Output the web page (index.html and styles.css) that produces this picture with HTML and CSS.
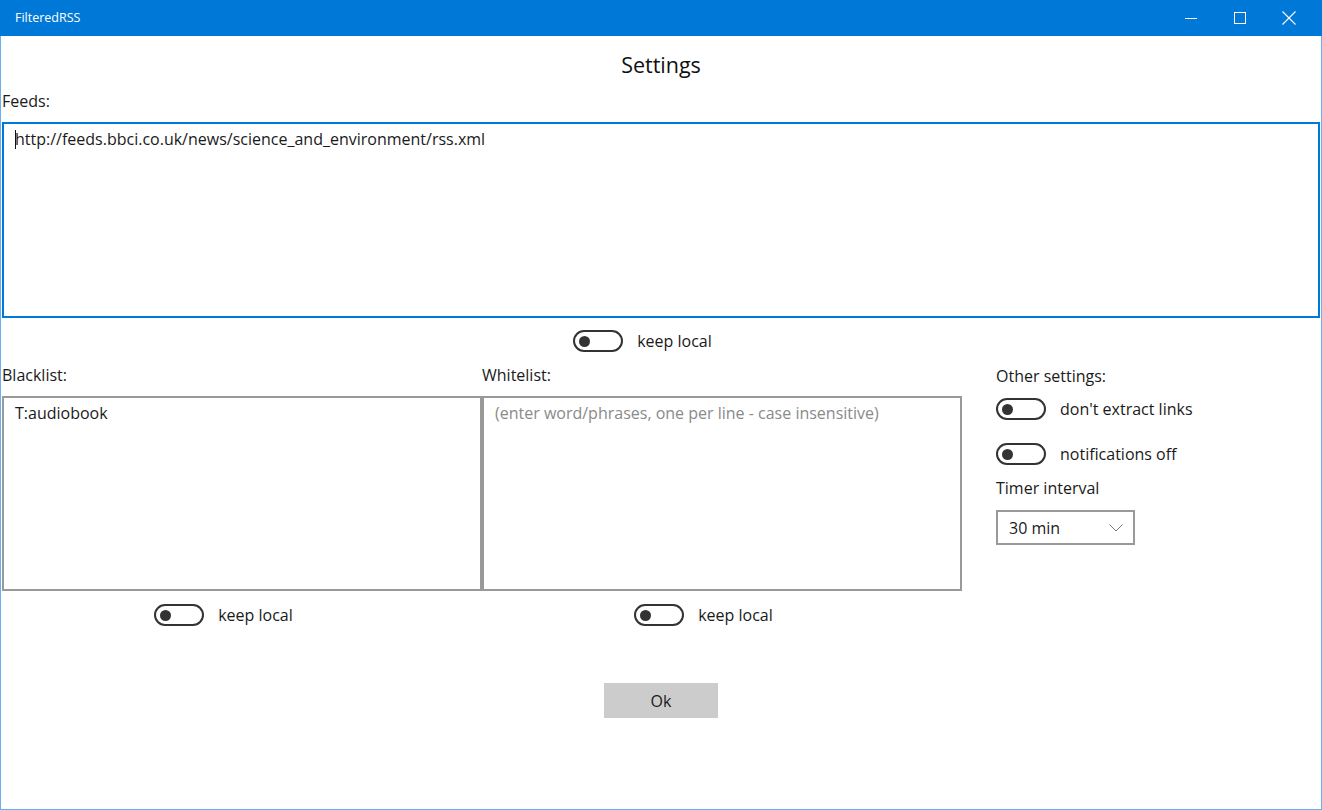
FILE: index.html
```html
<!DOCTYPE html>
<html>
<head>
<meta charset="utf-8">
<link rel="stylesheet" href="styles.css">
</head>
<body>
<div class="window">
  <div class="titlebar">
    <span class="app-title">FilteredRSS</span>
    <div class="caption-buttons">
      <span class="cap-btn">
        <svg width="12" height="12" viewBox="0 0 12 12"><line x1="0" y1="6.5" x2="12" y2="6.5" stroke="#fff" stroke-width="1"/></svg>
      </span>
      <span class="cap-btn">
        <svg width="12" height="12" viewBox="0 0 12 12"><rect x="0.5" y="0.5" width="11" height="11" fill="none" stroke="#fff" stroke-width="1"/></svg>
      </span>
      <span class="cap-btn">
        <svg width="14" height="14" viewBox="0 0 14 14"><path d="M0.5 0.5 L13.5 13.5 M13.5 0.5 L0.5 13.5" stroke="#fff" stroke-width="1.1" fill="none"/></svg>
      </span>
    </div>
  </div>
  <div class="content">
    <h1 class="page-title">Settings</h1>
    <div class="label">Feeds:</div>
    <div class="textbox feeds focused"><span class="caret"></span>http://feeds.bbci.co.uk/news/science_and_environment/rss.xml</div>
    <div class="toggle-row centered feeds-toggle">
      <span class="toggle"><span class="knob"></span></span>
      <span class="toggle-text">keep local</span>
    </div>

    <div class="lists">
      <div class="list-col">
        <div class="label">Blacklist:</div>
        <div class="textbox listbox">T:audiobook</div>
        <div class="toggle-row centered list-toggle">
          <span class="toggle"><span class="knob"></span></span>
          <span class="toggle-text">keep local</span>
        </div>
      </div>
      <div class="list-col">
        <div class="label">Whitelist:</div>
        <div class="textbox listbox placeholder">(enter word/phrases, one per line - case insensitive)</div>
        <div class="toggle-row centered list-toggle">
          <span class="toggle"><span class="knob"></span></span>
          <span class="toggle-text">keep local</span>
        </div>
      </div>
      <div class="other-col">
        <div class="label other-label">Other settings:</div>
        <div class="toggle-row other-toggle">
          <span class="toggle"><span class="knob"></span></span>
          <span class="toggle-text">don't extract links</span>
        </div>
        <div class="toggle-row other-toggle second">
          <span class="toggle"><span class="knob"></span></span>
          <span class="toggle-text">notifications off</span>
        </div>
        <div class="label timer-label">Timer interval</div>
        <div class="combo">
          <span>30 min</span>
          <svg class="chevron" width="14" height="8" viewBox="0 0 14 8"><path d="M0.5 0.5 L7 7 L13.5 0.5" fill="none" stroke="#777" stroke-width="1"/></svg>
        </div>
      </div>
    </div>

    <div class="actions">
      <button class="ok-btn">Ok</button>
    </div>
  </div>
</div>
</body>
</html>
```

FILE: styles.css
```css
* { box-sizing: border-box; }
html, body { margin: 0; padding: 0; background: #fff; }
body {
  font-family: "Open Sans", "Noto Sans", "Liberation Sans", sans-serif;
  color: #1a1a1a;
  font-size: 16px;
}
.window {
  width: 1322px;
  height: 810px;
  display: flex;
  flex-direction: column;
}
.titlebar {
  height: 36px;
  background: #0078d7;
  display: flex;
  align-items: center;
  justify-content: space-between;
  color: #fff;
  flex: none;
}
.app-title {
  font-size: 12.5px;
  padding-left: 15px;
  padding-bottom: 2px;
}
.caption-buttons { display: flex; height: 36px; margin-right: 9px; }
.cap-btn {
  width: 49px;
  height: 36px;
  display: flex;
  align-items: center;
  justify-content: center;
}
.content {
  flex: 1;
  border: 1px solid #6aaeef;
  border-top: none;
  padding: 0 1px;
  display: flex;
  flex-direction: column;
}
.page-title {
  margin: 15px 0 0;
  font-size: 21.5px;
  font-weight: normal;
  line-height: 28px;
  text-align: center;
  color: #111;
}
.label {
  line-height: 20px;
  font-size: 16px;
  color: #1a1a1a;
}
.content > .label { margin-top: 12px; }
.textbox {
  border: 2px solid #999;
  background: #fff;
  padding: 5px 11px 6px;
  line-height: 20px;
  font-size: 16px;
}
.feeds {
  margin-top: 11px;
  height: 196px;
  border-color: #0078d7;
  position: relative;
}
.caret {
  display: inline-block;
  width: 1px;
  height: 19px;
  background: #111;
  vertical-align: -4px;
  margin-right: -1px;
}
.toggle-row {
  display: flex;
  align-items: center;
  height: 22px;
}
.centered { justify-content: center; padding-right: 37px; }
.feeds-toggle { margin-top: 12px; }
.toggle {
  width: 50px;
  height: 22px;
  border: 2px solid #333;
  border-radius: 11px;
  display: flex;
  align-items: center;
  padding-left: 4px;
  flex: none;
}
.knob {
  width: 11px;
  height: 11px;
  border-radius: 50%;
  background: #333;
}
.toggle-text {
  margin-left: 14px;
  line-height: 20px;
}
.lists {
  display: flex;
  margin-top: 13px;
}
.list-col {
  width: 480px;
  display: flex;
  flex-direction: column;
}
.listbox {
  margin-top: 11px;
  height: 195px;
}
.placeholder { color: #8a8a8a; }
.list-toggle { margin-top: 13px; }
.other-col {
  margin-left: 34px;
  display: flex;
  flex-direction: column;
  padding-top: 1px;
}
.other-toggle { margin-top: 12px; }
.other-toggle.second { margin-top: 23px; }
.timer-label { margin-top: 13px; }
.combo {
  margin-top: 12px;
  width: 139px;
  height: 35px;
  border: 2px solid #999;
  display: flex;
  align-items: center;
  justify-content: space-between;
  padding: 0 10px 0 11px;
}
.chevron { margin-top: 1px; }
.actions {
  display: flex;
  justify-content: center;
  margin-top: 57px;
}
.ok-btn {
  width: 114px;
  height: 35px;
  background: #cccccc;
  border: none;
  font-family: inherit;
  font-size: 16px;
  color: #1a1a1a;
  padding: 0;
}
```
